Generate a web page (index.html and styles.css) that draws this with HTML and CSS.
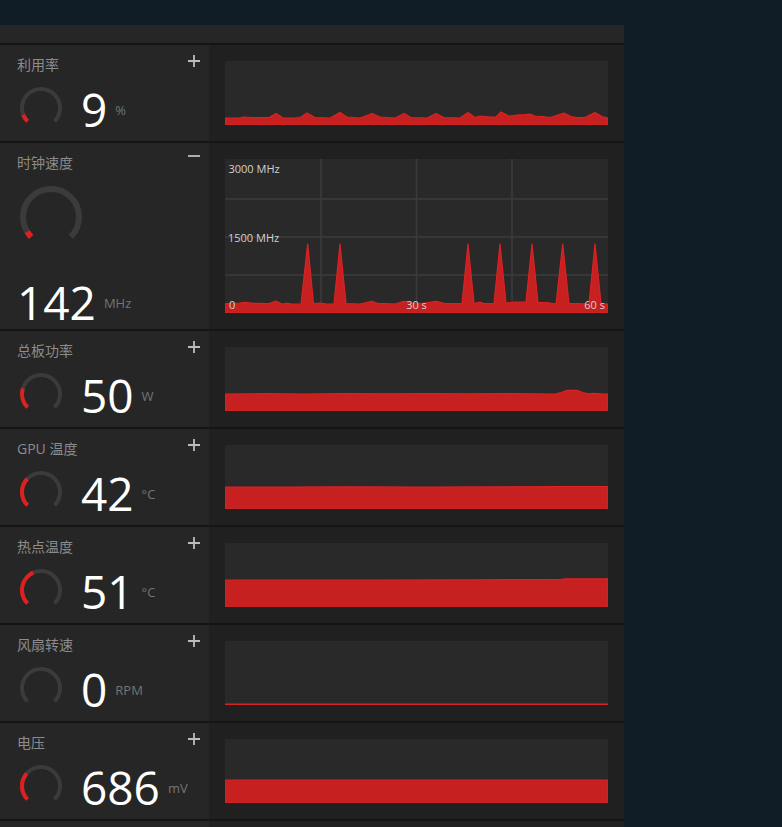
FILE: index.html
```html
<!DOCTYPE html>
<html lang="zh-CN">
<head>
<meta charset="utf-8">
<title>性能指标</title>
<link rel="stylesheet" href="styles.css">
</head>
<body>
<div class="panel">
  <div class="panel-top"></div>

  <section class="metric">
    <div class="metric-info">
      <div class="metric-head">
        <span class="metric-name">利用率</span>
        <svg class="toggle" viewBox="0 0 12 12"><path d="M0 6H12M6 0V12"/></svg>
      </div>
      <div class="reading">
        <svg class="gauge" viewBox="0 0 46 46"><path class="gauge-track" d="M9.565 36.435A19 19 0 1 1 36.435 36.435"/><path class="gauge-fill" pathLength="100" stroke-dasharray="9 100" d="M9.565 36.435A19 19 0 1 1 36.435 36.435"/></svg>
        <span class="value">9</span><span class="unit">%</span>
      </div>
    </div>
    <div class="metric-chart">
      <svg class="chart" viewBox="0 0 383 64" preserveAspectRatio="none">
        <polygon class="area" points="0,64 0,57 15,57 18,56 28,56.5 44,56.5 51,52.5 58,57 70,57 76,56 82,52 90,56.5 105,57 115,51.5 122,56 135,57 147,52.5 155,56 170,57 179,52.5 186,56.5 202,57 211,52.5 219,56.5 235,57 243,51.5 250,56.5 255,55 260,55.5 266,56 271,56 276,51 284,55 292,54 300,53.5 305,53 310,55 318,55.7 325,56.5 339,52 346,55.5 352,56.5 360,56.5 370,51.5 377,55.5 383,57 383,64"/>
      </svg>
    </div>
  </section>

  <section class="metric metric--expanded">
    <div class="metric-info">
      <div class="metric-head">
        <span class="metric-name">时钟速度</span>
        <svg class="toggle" viewBox="0 0 12 12"><path d="M0 3H12"/></svg>
      </div>
      <svg class="gauge-lg" viewBox="0 0 64 64"><path class="gauge-track" d="M12.201 51.799A28 28 0 1 1 51.799 51.799"/><path class="gauge-fill" pathLength="100" stroke-dasharray="5 100" d="M12.201 51.799A28 28 0 1 1 51.799 51.799"/></svg>
      <div class="reading reading--big">
        <span class="value">142</span><span class="unit">MHz</span>
      </div>
    </div>
    <div class="metric-chart">
      <svg class="chart chart--tall" viewBox="0 0 383 154" preserveAspectRatio="none">
        <g class="grid">
          <path d="M0 40H383M0 78H383M0 116H383M96 0V154M191.5 0V154M287 0V154"/>
        </g>
        <polygon class="area" points="0,154 0,144.5 15,144 20,143.3 28,144.3 44,144.5 51,142 57,145 62,144.3 67,145 76,145 82.7,85 88.5,144.5 95,144 102,145 109,145 115,85 121,144.5 135,145 147,142.3 153,144.5 160,144.5 170,145 179,142.3 188,144.5 200,144.2 211,142.3 220,144.5 237,144.5 243,85 249,144.5 255,143 259,144.5 269,144.5 275,85 281,144 290,143 301,143 307,85 313,143.5 322,143.5 331,145 337.7,85 344,144.5 352,144.5 364,145 370,85 376,144.5 383,145 383,154"/>
        <text class="axis" x="3.5" y="14">3000 MHz</text>
        <text class="axis" x="3" y="83">1500 MHz</text>
        <text class="axis" x="4" y="150">0</text>
        <text class="axis" x="191.5" y="150" text-anchor="middle">30 s</text>
        <text class="axis" x="380" y="150" text-anchor="end">60 s</text>
      </svg>
    </div>
  </section>

  <section class="metric">
    <div class="metric-info">
      <div class="metric-head">
        <span class="metric-name">总板功率</span>
        <svg class="toggle" viewBox="0 0 12 12"><path d="M0 6H12M6 0V12"/></svg>
      </div>
      <div class="reading">
        <svg class="gauge" viewBox="0 0 46 46"><path class="gauge-track" d="M9.565 36.435A19 19 0 1 1 36.435 36.435"/><path class="gauge-fill" pathLength="100" stroke-dasharray="23 100" d="M9.565 36.435A19 19 0 1 1 36.435 36.435"/></svg>
        <span class="value">50</span><span class="unit">W</span>
      </div>
    </div>
    <div class="metric-chart">
      <svg class="chart" viewBox="0 0 383 64" preserveAspectRatio="none">
        <polygon class="area" points="0,64 0,47 40,46.7 80,47 120,46.6 160,46.8 200,46.5 245,46.8 290,46.7 330,47 336,45.5 342,43.3 352,43.3 358,45.5 363,46.8 369,46.3 376,46.8 383,47 383,64"/>
      </svg>
    </div>
  </section>

  <section class="metric">
    <div class="metric-info">
      <div class="metric-head">
        <span class="metric-name">GPU 温度</span>
        <svg class="toggle" viewBox="0 0 12 12"><path d="M0 6H12M6 0V12"/></svg>
      </div>
      <div class="reading">
        <svg class="gauge" viewBox="0 0 46 46"><path class="gauge-track" d="M9.565 36.435A19 19 0 1 1 36.435 36.435"/><path class="gauge-fill" pathLength="100" stroke-dasharray="33 100" d="M9.565 36.435A19 19 0 1 1 36.435 36.435"/></svg>
        <span class="value">42</span><span class="unit">°C</span>
      </div>
    </div>
    <div class="metric-chart">
      <svg class="chart" viewBox="0 0 383 64" preserveAspectRatio="none">
        <polygon class="area" points="0,64 0,42 60,42 120,41.8 200,42 280,41.8 340,41.6 383,41.5 383,64"/>
      </svg>
    </div>
  </section>

  <section class="metric">
    <div class="metric-info">
      <div class="metric-head">
        <span class="metric-name">热点温度</span>
        <svg class="toggle" viewBox="0 0 12 12"><path d="M0 6H12M6 0V12"/></svg>
      </div>
      <div class="reading">
        <svg class="gauge" viewBox="0 0 46 46"><path class="gauge-track" d="M9.565 36.435A19 19 0 1 1 36.435 36.435"/><path class="gauge-fill" pathLength="100" stroke-dasharray="41 100" d="M9.565 36.435A19 19 0 1 1 36.435 36.435"/></svg>
        <span class="value">51</span><span class="unit">°C</span>
      </div>
    </div>
    <div class="metric-chart">
      <svg class="chart" viewBox="0 0 383 64" preserveAspectRatio="none">
        <polygon class="area" points="0,64 0,37 150,37 260,36.8 335,36.5 340,35.8 383,35.8 383,64"/>
      </svg>
    </div>
  </section>

  <section class="metric">
    <div class="metric-info">
      <div class="metric-head">
        <span class="metric-name">风扇转速</span>
        <svg class="toggle" viewBox="0 0 12 12"><path d="M0 6H12M6 0V12"/></svg>
      </div>
      <div class="reading">
        <svg class="gauge" viewBox="0 0 46 46"><path class="gauge-track" d="M9.565 36.435A19 19 0 1 1 36.435 36.435"/></svg>
        <span class="value">0</span><span class="unit">RPM</span>
      </div>
    </div>
    <div class="metric-chart">
      <svg class="chart" viewBox="0 0 383 64" preserveAspectRatio="none">
        <polygon class="area" points="0,64 0,63.2 383,63.2 383,64"/>
      </svg>
    </div>
  </section>

  <section class="metric">
    <div class="metric-info">
      <div class="metric-head">
        <span class="metric-name">电压</span>
        <svg class="toggle" viewBox="0 0 12 12"><path d="M0 6H12M6 0V12"/></svg>
      </div>
      <div class="reading">
        <svg class="gauge" viewBox="0 0 46 46"><path class="gauge-track" d="M9.565 36.435A19 19 0 1 1 36.435 36.435"/><path class="gauge-fill" pathLength="100" stroke-dasharray="32 100" d="M9.565 36.435A19 19 0 1 1 36.435 36.435"/></svg>
        <span class="value">686</span><span class="unit">mV</span>
      </div>
    </div>
    <div class="metric-chart">
      <svg class="chart" viewBox="0 0 383 64" preserveAspectRatio="none">
        <polygon class="area" points="0,64 0,41 383,41 383,64"/>
      </svg>
    </div>
  </section>

  <section class="metric" aria-hidden="true">
    <div class="metric-info"></div>
    <div class="metric-chart"></div>
  </section>
</div>
</body>
</html>
```

FILE: styles.css
```css
html, body {
  margin: 0;
  padding: 0;
  overflow: hidden;
}

body {
  width: 782px;
  height: 827px;
  background: #111d26;
  font-family: "Open Sans", "Noto Sans CJK SC", sans-serif;
}

.panel {
  width: 624px;
  margin-top: 25px;
  background: #202020;
}

.panel-top {
  height: 18px;
  background: #262626;
}

.metric {
  display: grid;
  grid-template-columns: 209px 1fr;
  height: 96px;
  border-top: 2px solid #151515;
}

.metric--expanded {
  height: 186px;
}

.metric-info {
  background: #262626;
  padding: 10px 9px 0 17px;
}

.metric-head {
  display: flex;
  justify-content: space-between;
  align-items: flex-start;
  height: 20px;
}

.metric-name {
  font-size: 14px;
  line-height: 20px;
  color: #8c8c8c;
  white-space: nowrap;
}

.toggle {
  width: 12px;
  height: 12px;
  fill: none;
  stroke: #bcbcbc;
  stroke-width: 1.8;
}

.reading {
  display: flex;
  align-items: flex-start;
  margin-top: 10px;
}

.reading--big {
  margin-top: 29px;
}

.gauge {
  flex: none;
  width: 46px;
  height: 46px;
  margin-left: 1px;
  margin-right: 17px;
}

.gauge-lg {
  display: block;
  width: 64px;
  height: 64px;
  margin: 12px 0 0 2px;
}

.gauge-track {
  fill: none;
  stroke: #3b3b3b;
  stroke-width: 4;
}

.gauge-fill {
  fill: none;
  stroke: #e21f1f;
  stroke-width: 4;
}

.gauge-lg .gauge-track,
.gauge-lg .gauge-fill {
  stroke-width: 6;
}

.value {
  font-size: 46px;
  line-height: 48px;
  color: #ffffff;
  white-space: nowrap;
}

.unit {
  font-size: 13px;
  line-height: 16px;
  color: #747474;
  margin: 17px 0 0 8px;
  white-space: nowrap;
}

.metric-chart {
  padding: 16px;
}

.chart {
  display: block;
  width: 383px;
  height: 64px;
  background: #292929;
}

.chart--tall {
  height: 154px;
}

.grid path {
  fill: none;
  stroke: #3c3c3c;
  stroke-width: 1.5;
}

.area {
  fill: #c62020;
  stroke: #da2323;
  stroke-width: 1.2;
  stroke-linejoin: round;
}

.axis {
  font-family: "Open Sans", sans-serif;
  font-size: 11px;
  fill: #d2d2d2;
}
```
